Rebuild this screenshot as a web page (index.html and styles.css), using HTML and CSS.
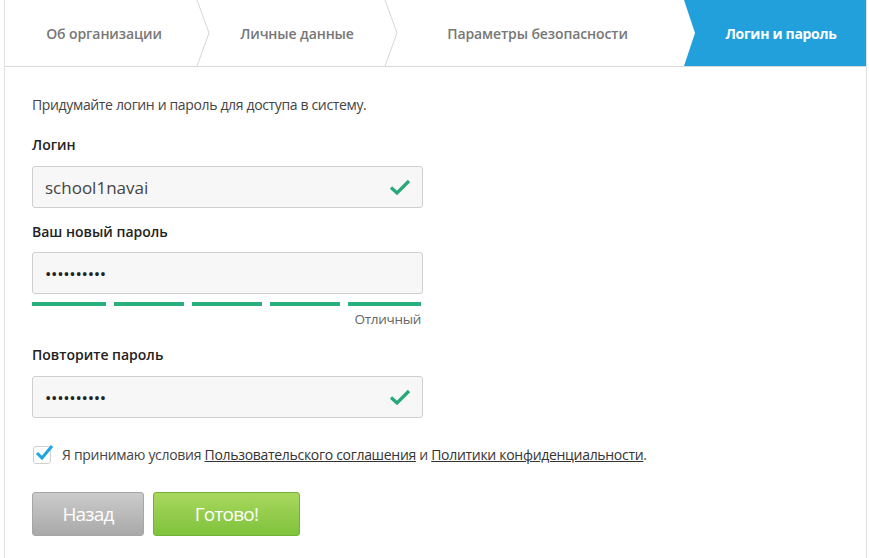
FILE: index.html
```
<!DOCTYPE html>
<html lang="ru">
<head>
<meta charset="utf-8">
<link rel="stylesheet" href="styles.css">
</head>
<body>
<div class="panel">
  <div class="steps">
    <div class="step s1">Об организации
      <svg class="sep" width="14" height="66" viewBox="0 0 14 66"><polyline points="1,0 13,33 1,66" fill="none" stroke="#d6d6d6" stroke-width="1"/></svg>
    </div>
    <div class="step s2">Личные данные
      <svg class="sep" width="14" height="66" viewBox="0 0 14 66"><polyline points="1,0 13,33 1,66" fill="none" stroke="#d6d6d6" stroke-width="1"/></svg>
    </div>
    <div class="step s3">Параметры безопасности</div>
    <div class="step s4 active">Логин и пароль</div>
  </div>
  <div class="form">
    <p class="intro">Придумайте логин и пароль для доступа в систему.</p>
    <div class="label">Логин</div>
    <div class="field">
      <span class="value">school1navai</span>
      <svg class="check" width="22" height="16" viewBox="0 0 22 16"><polyline points="2,8.5 8,14 20,2" fill="none" stroke="#26a878" stroke-width="3.2"/></svg>
    </div>
    <div class="label l2">Ваш новый пароль</div>
    <div class="field">
      <span class="dots">••••••••••</span>
    </div>
    <div class="strength">
      <span class="bar"></span><span class="bar"></span><span class="bar"></span><span class="bar"></span><span class="bar"></span>
    </div>
    <div class="strength-text">Отличный</div>
    <div class="label l3">Повторите пароль</div>
    <div class="field">
      <span class="dots">••••••••••</span>
      <svg class="check" width="22" height="16" viewBox="0 0 22 16"><polyline points="2,8.5 8,14 20,2" fill="none" stroke="#26a878" stroke-width="3.2"/></svg>
    </div>
    <div class="agree">
      <span class="box"><svg width="20" height="18" viewBox="0 0 20 18"><polyline points="3,9 8,14 18,2" fill="none" stroke="#1ea6e0" stroke-width="3"/></svg></span>
      <span class="agree-text">Я принимаю условия <a href="#">Пользовательского соглашения</a> и <a href="#">Политики конфиденциальности</a>.</span>
    </div>
    <div class="buttons">
      <button class="btn back">Назад</button>
      <button class="btn done">Готово!</button>
    </div>
  </div>
</div>
</body>
</html>
```
FILE: styles.css
```
html, body {
  margin: 0;
  padding: 0;
  background: #fff;
}
body {
  font-family: "Open Sans", "Liberation Sans", sans-serif;
  color: #333;
}
.panel {
  margin-left: 4px;
  width: 861px;
  min-height: 558px;
  border-left: 1px solid #e2e2e2;
  border-right: 1px solid #e2e2e2;
}
.steps {
  display: flex;
  height: 66px;
  border-bottom: 1px solid #d9d9d9;
}
.step {
  position: relative;
  display: flex;
  align-items: center;
  justify-content: center;
  font-size: 14px;
  font-weight: 600;
  color: #777;
  letter-spacing: -0.1px;
}
.s1 { width: 198px; }
.s2 { width: 188px; }
.s3 { width: 293px; }
.s4 { flex: 1; }
.sep {
  position: absolute;
  right: -7px;
  top: 0;
}
.active {
  background: #21a0dc;
  color: #fff;
  font-weight: 700;
  letter-spacing: -0.3px;
  clip-path: polygon(0 0, 100% 0, 100% 100%, 0 100%, 11px 50%);
  padding-left: 12px;
}
.form {
  padding: 28px 0 0 27px;
}
.intro {
  margin: 0 0 21px;
  font-size: 14px;
  color: #444;
  letter-spacing: -0.35px;
}
.label {
  font-size: 14px;
  font-weight: 600;
  color: #222;
  margin-bottom: 12px;
}
.l2 { margin-top: 14px; margin-bottom: 11px; }
.l3 { margin-top: 17px; margin-bottom: 12px; }
.field {
  height: 40px;
  border: 1px solid #cfcfcf;
  border-radius: 3px;
  background: #f7f7f7;
  display: flex;
  align-items: center;
  justify-content: space-between;
  padding: 0 11px 0 12px;
  box-sizing: content-box;
  width: 366px;
}
.value {
  font-size: 17px;
  color: #444;
}
.dots {
  font-size: 17px;
  color: #222;
  letter-spacing: -0.3px;
}
.check { display: block; }
.strength {
  display: flex;
  gap: 8px;
  width: 389px;
  margin-top: 8px;
}
.bar {
  height: 4px;
  background: #2ab07e;
  flex: 70 0 0;
}
.bar:first-child { flex-basis: 0; flex-grow: 74; }
.bar:last-child { flex-grow: 73; }
.strength-text {
  width: 389px;
  text-align: right;
  font-size: 13.5px;
  color: #666;
  margin-top: 4px;
  letter-spacing: -0.3px;
}
.agree {
  display: flex;
  align-items: center;
  gap: 11px;
  margin-top: 27px;
}
.box {
  width: 16px;
  height: 16px;
  border: 1px solid #cfcfcf;
  border-radius: 3px;
  background: #fff;
  position: relative;
  margin-left: 1px;
}
.box svg {
  position: absolute;
  left: 0;
  top: -3px;
}
.agree-text {
  font-size: 14px;
  color: #444;
  letter-spacing: -0.3px;
}
.agree-text a {
  color: #333;
  text-decoration: underline;
}
.buttons {
  display: flex;
  gap: 9px;
  margin-top: 28px;
}
.btn {
  height: 44px;
  border-radius: 3px;
  font-family: "Open Sans", "Liberation Sans", sans-serif;
  font-size: 19px;
  color: #fff;
  letter-spacing: -0.8px;
  cursor: pointer;
}
.back {
  width: 112px;
  border: 1px solid #a6a6a6;
  background: linear-gradient(#cbcbcb, #a9a9a9);
}
.done {
  width: 147px;
  border: 1px solid #72b236;
  background: linear-gradient(#a9d85e, #7fc23c);
}
```
